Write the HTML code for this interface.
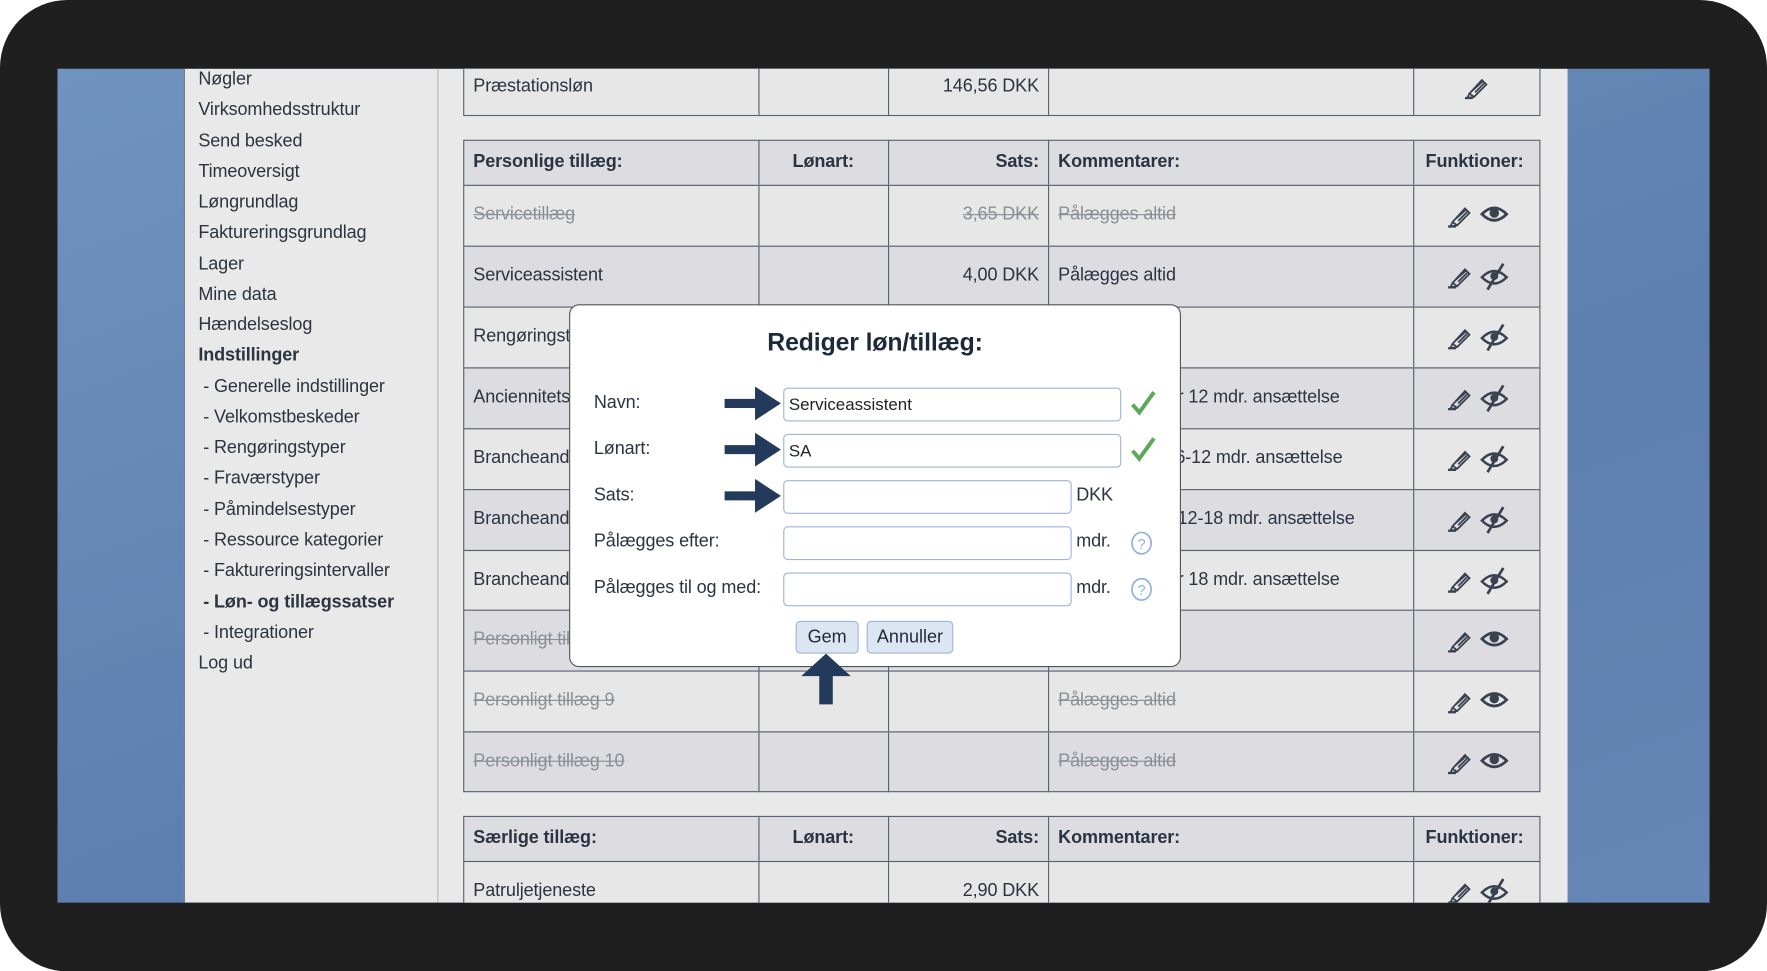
<!DOCTYPE html>
<html><head><meta charset="utf-8"><style>
html,body{margin:0;padding:0;background:#fff;width:1767px;height:971px;overflow:hidden}
#w{position:absolute;left:0;top:0;width:1568px;height:862px;transform:scale(1.12691);transform-origin:0 0;font-family:"Liberation Sans",sans-serif;color:#2b3440}
.frame{position:absolute;left:0;top:0;width:1568px;height:862px;background:#1f1f1f;border-radius:60px}
.screen{position:absolute;left:51px;top:61px;width:1466px;height:740px;overflow:hidden;background:linear-gradient(160deg,#7093bf,#5d7fb0 60%,#6686b5)}
.panel{position:absolute;left:112px;top:0;width:1227px;height:740px;background:#e9e9e9;border-left:1px solid #5a6478}
.side{position:absolute;left:0;top:0;width:224px;height:740px;border-right:1px solid #b8b8b8}
.side div{position:absolute;left:12px;font-size:16px;white-space:nowrap;letter-spacing:-0.1px}
.a{position:absolute;white-space:nowrap;font-size:16px;letter-spacing:-0.1px}
.cell{position:absolute;box-sizing:border-box;border:1px solid #5c6370}
.s{text-decoration:line-through;color:#8a8f96}
.b{font-weight:bold}
.modal{position:absolute;left:505px;top:270px;width:543px;height:322px;background:#fff;border-radius:9px;border:1px solid #555;box-sizing:border-box}
.inp{position:absolute;height:30px;border:1px solid #9db4d8;border-radius:4px;box-sizing:border-box;background:#fff;font-size:15px;padding:6px 4px;color:#222}
.btn{position:absolute;top:551px;height:29px;border:1px solid #9db4d8;border-radius:4px;background:#dce6f3;box-sizing:border-box;font-size:16px;text-align:center;line-height:27px;color:#1e2a3a}
</style></head><body><div id="w">
<div class="frame"></div>
<div class="screen">
<div class="panel">
<div class="side">
<div style="top:1px">Nøgler</div><div style="top:28px">Virksomhedsstruktur</div><div style="top:56px">Send besked</div><div style="top:83px">Timeoversigt</div><div style="top:110px">Løngrundlag</div><div style="top:137px">Faktureringsgrundlag</div><div style="top:165px">Lager</div><div style="top:192px">Mine data</div><div style="top:219px">Hændelseslog</div><div style="top:246px" class="b">Indstillinger</div><div style="top:274px">&nbsp;- Generelle indstillinger</div><div style="top:301px">&nbsp;- Velkomstbeskeder</div><div style="top:328px">&nbsp;- Rengøringstyper</div><div style="top:355px">&nbsp;- Fraværstyper</div><div style="top:383px">&nbsp;- Påmindelsestyper</div><div style="top:410px">&nbsp;- Ressource kategorier</div><div style="top:437px">&nbsp;- Faktureringsintervaller</div><div style="top:465px" class="b">&nbsp;- Løn- og tillægssatser</div><div style="top:492px">&nbsp;- Integrationer</div><div style="top:519px">Log ud</div>
</div>
</div>
</div>
<div id="t" style="position:absolute;left:0;top:0;width:1568px;height:801px;overflow:hidden;clip-path:inset(61px 0 0 0)"></div>
<div class="modal"></div>
<div class="a b" style="left:505px;width:543px;text-align:center;top:291px;font-size:22px;color:#1e2a3a">Rediger løn/tillæg:</div>
<div class="a" style="left:527px;top:349px">Navn:</div>
<div class="a" style="left:527px;top:390px">Lønart:</div>
<div class="a" style="left:527px;top:431px">Sats:</div>
<div class="a" style="left:527px;top:472px">Pålægges efter:</div>
<div class="a" style="left:527px;top:513px">Pålægges til og med:</div>
<div class="inp" style="left:695px;top:344px;width:300px">Serviceassistent</div>
<div class="inp" style="left:695px;top:385px;width:300px">SA</div>
<div class="inp" style="left:695px;top:426px;width:256px"></div>
<div class="inp" style="left:695px;top:467px;width:256px"></div>
<div class="inp" style="left:695px;top:508px;width:256px"></div>
<div class="a" style="left:955px;top:431px">DKK</div>
<div class="a" style="left:955px;top:472px">mdr.</div>
<div class="a" style="left:955px;top:513px">mdr.</div>
<svg style="position:absolute;left:1002px;top:345px" width="24" height="26"><path d="M3 14 L9 21 L22 3" stroke="#5aaa5a" stroke-width="3.5" fill="none"/></svg>
<svg style="position:absolute;left:1002px;top:386px" width="24" height="26"><path d="M3 14 L9 21 L22 3" stroke="#5aaa5a" stroke-width="3.5" fill="none"/></svg>
<svg style="position:absolute;left:1003px;top:471px" width="20" height="22"><ellipse cx="10" cy="11" rx="8.5" ry="9.5" fill="none" stroke="#8fb0e0" stroke-width="1.5"/><text x="10" y="16" font-size="13" text-anchor="middle" fill="#8fb0e0" font-family="Liberation Sans">?</text></svg>
<svg style="position:absolute;left:1003px;top:512px" width="20" height="22"><ellipse cx="10" cy="11" rx="8.5" ry="9.5" fill="none" stroke="#8fb0e0" stroke-width="1.5"/><text x="10" y="16" font-size="13" text-anchor="middle" fill="#8fb0e0" font-family="Liberation Sans">?</text></svg>
<div class="btn" style="left:706px;width:56px">Gem</div>
<div class="btn" style="left:769px;width:77px">Annuller</div>
<svg style="position:absolute;left:640px;top:340px" width="56" height="120"><g fill="#243a5a"><path d="M3 14h27v-11l23 15-23 15v-11h-27z"/><path d="M3 55h27v-11l23 15-23 15v-11h-27z"/><path d="M3 96h27v-11l23 15-23 15v-11h-27z"/></g></svg>
<svg style="position:absolute;left:708px;top:578px" width="50" height="48"><path d="M25 2 L47 22 H31 V47 H19 V22 H3 Z" fill="#243a5a"/></svg>
</div>
<script>
var T=document.getElementById('t'),h='';
var cols=[411,673,788,930,1254,1366];
var pen='<svg width="24" height="24" viewBox="0 0 24 24"><g fill="none" stroke="#3a4250" stroke-width="1.6"><path d="M6 18 L17 6 L21 10 L10 21 Z"/><path d="M9 15 L18 7 M11 17 L19 9"/><path d="M6 18 L4 22 L10 21"/></g><path d="M2 22h7" stroke="#3a4250" stroke-width="2"/></svg>';
var eye='<svg width="26" height="20" viewBox="0 0 26 20"><path d="M2 10 Q13 -1 24 10 Q13 21 2 10Z" fill="none" stroke="#3a4250" stroke-width="2.4"/><circle cx="13" cy="9" r="4.2" fill="#3a4250"/></svg>';
var eyes='<svg width="26" height="26" viewBox="0 0 26 26"><path d="M2 14 Q13 3 24 14 Q13 25 2 14Z" fill="none" stroke="#3a4250" stroke-width="2.2"/><circle cx="13" cy="13" r="3.5" fill="#3a4250"/><path d="M7 25 L21 2" stroke="#3a4250" stroke-width="2.4"/></svg>';
function row(y,hgt,bg,c,ic,px){
 for(var i=0;i<5;i++){h+='<div class="cell" style="left:'+cols[i]+'px;top:'+y+'px;width:'+(cols[i+1]-cols[i]+1)+'px;height:'+(hgt+1)+'px;background:'+bg+'"></div>';}
 var ty=y+hgt/2-9;
 if(c[0])h+='<div class="a '+(c[4]||'')+'" style="left:420px;top:'+ty+'px">'+c[0]+'</div>';
 if(c[1])h+='<div class="a '+(c[4]||'')+'" style="left:673px;width:115px;text-align:center;top:'+ty+'px">'+c[1]+'</div>';
 if(c[2])h+='<div class="a '+(c[4]||'')+'" style="left:788px;width:134px;text-align:right;top:'+ty+'px">'+c[2]+'</div>';
 if(c[3])h+='<div class="a '+(c[4]||'')+'" style="left:'+(c[5]||939)+'px;top:'+ty+'px">'+c[3]+'</div>';
 if(ic==='h')h+='<div class="a b" style="left:1265px;top:'+ty+'px">Funktioner:</div>';
 else if(ic){h+='<div style="position:absolute;left:'+(px||1283)+'px;top:'+(y+hgt/2-12)+'px">'+pen+'</div>';
  if(ic!=='p')h+='<div style="position:absolute;left:1313px;top:'+(y+hgt/2-(ic==='e'?11:13))+'px">'+(ic==='e'?eye:eyes)+'</div>';}
}
var L='#e7e7e7',D='#dcdce1',H='#dcdce1';
row(52,50,L,['Præstationsløn','','146,56 DKK',''],'p',1298);
row(124,40,H,['Personlige tillæg:','Lønart:','Sats:','Kommentarer:','b'],'h');
var r=[['Servicetillæg','','3,65 DKK','Pålægges altid','s','e'],['Serviceassistent','','4,00 DKK','Pålægges altid','','x'],['Rengøringstillæg','','','','','x'],['Anciennitetstillæg','','','r 12 mdr. ansættelse','','x',1045],['Brancheandel','','','6-12 mdr. ansættelse','','x',1043],['Brancheandel','','','12-18 mdr. ansættelse','','x',1045],['Brancheandel','','','r 18 mdr. ansættelse','','x',1045],['Personligt tillæg 8','','','','s','e'],['Personligt tillæg 9','','','Pålægges altid','s','e'],['Personligt tillæg 10','','','Pålægges altid','s','e']];
var ys=[164,218,272,326,380,434,488,541,595,649,702];
for(var k=0;k<10;k++){var q=r[k];row(ys[k],ys[k+1]-ys[k],k%2?D:L,[q[0],q[1],q[2],q[3],q[4],q[6]],q[5]);}
row(724,40,H,['Særlige tillæg:','Lønart:','Sats:','Kommentarer:','b'],'h');
row(764,54,L,['Patruljetjeneste','','2,90 DKK',''],'x');
T.innerHTML=h;
</script>
</body></html>
